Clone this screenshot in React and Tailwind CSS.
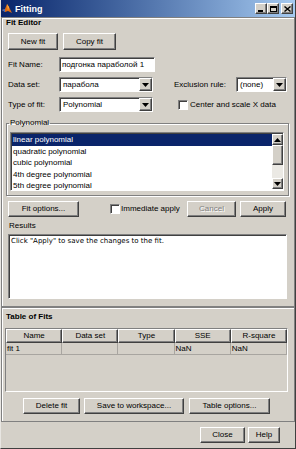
import React from 'react'

const raised =
  'bg-[#d4d0c8] border border-t-white border-l-white border-r-[#404040] border-b-[#404040] shadow-[inset_-1px_-1px_0_#808080]'
const sunken =
  'bg-white border border-t-[#808080] border-l-[#808080] border-r-white border-b-white shadow-[inset_1px_1px_0_#404040]'

const Arrow = ({ up }) => (
  <svg width="7" height="4" viewBox="0 0 7 4">
    <path d={up ? 'M0 4h7L3.5 0z' : 'M0 0h7L3.5 4z'} fill="#000" />
  </svg>
)

const Button = ({ className, children, disabled }) => (
  <div
    className={`${raised} flex items-center justify-center shrink-0 ${className} ${
      disabled ? 'text-[#808080] [text-shadow:1px_1px_0_white]' : ''
    }`}
  >
    {children}
  </div>
)

const Dropdown = ({ className, value }) => (
  <div className={`${sunken} h-[15px] flex items-stretch shrink-0 ${className}`}>
    <div className="flex-1 pl-[3px] flex items-center">{value}</div>
    <div className={`${raised} w-[13px] flex items-center justify-center`}>
      <Arrow />
    </div>
  </div>
)

const Checkbox = ({ className }) => (
  <div className={`${sunken} w-[10px] h-[10px] shrink-0 ${className}`} />
)

const MatlabIcon = () => (
  <svg width="10" height="11" viewBox="0 0 10 11">
    <path d="M0 7 L3 6 L5 1 L7 4 L10 10 L6 8 L3 9 Z" fill="#e06a10" />
    <path d="M0 7 L3 6 L3 9 Z" fill="#3a6fc8" />
    <path d="M5 1 L7 4 L6 8 Z" fill="#f8b040" />
  </svg>
)

const TitleButton = ({ children, className }) => (
  <div className={`${raised} w-[12px] h-[11px] flex items-center justify-center ${className}`}>{children}</div>
)

export default function App() {
  const polys = [
    'linear polynomial',
    'quadratic polynomial',
    'cubic polynomial',
    '4th degree polynomial',
    '5th degree polynomial',
  ]
  const cols = ['Name', 'Data set', 'Type', 'SSE', 'R-square']
  const row = ['fit 1', '', '', 'NaN', 'NaN']

  return (
    <div className="w-[296px] h-[449px] bg-[#d4d0c8] font-['Liberation_Sans',Arial,sans-serif] text-[8px] leading-[10px] text-black flex flex-col border-l border-l-[#e8e6e2] border-r border-r-[#404040] border-b border-b-[#404040] overflow-hidden">
      {/* Title bar */}
      <div className="h-[17px] shrink-0 bg-gradient-to-r from-[#0a246a] to-[#a6caf0] flex items-center pl-[1px] pr-[2px]">
        <MatlabIcon />
        <span className="ml-[3px] text-white font-bold text-[9px]">Fitting</span>
        <div className="ml-auto flex items-center">
          <TitleButton>
            <div className="w-[5px] h-[2px] bg-black mt-[5px] mr-[1px]" />
          </TitleButton>
          <TitleButton>
            <div className="w-[7px] h-[6px] border border-black border-t-2" />
          </TitleButton>
          <TitleButton className="ml-[2px]">
            <svg width="7" height="6" viewBox="0 0 7 6">
              <path d="M0.5 0.5L6.5 5.5M6.5 0.5L0.5 5.5" stroke="#000" strokeWidth="1.4" />
            </svg>
          </TitleButton>
        </div>
      </div>

      {/* Fit Editor */}
      <div className="h-[290px] shrink-0 border border-[#808080] shadow-[inset_1px_1px_0_white] flex flex-col">
        <div className="ml-[4px] h-[10px] font-bold">Fit Editor</div>

        <div className="mt-[5px] ml-[6px] flex gap-[5px]">
          <Button className="w-[50px] h-[17px]">New fit</Button>
          <Button className="w-[53px] h-[17px]">Copy fit</Button>
        </div>

        <div className="mt-[7px] ml-[6px] h-[15px] flex items-center">
          <span className="w-[51px]">Fit Name:</span>
          <div className={`${sunken} w-[96px] h-[15px] pl-[2px] flex items-center`}>подгонка параболой 1</div>
        </div>

        <div className="mt-[5px] ml-[6px] h-[15px] flex items-center">
          <span className="w-[51px]">Data set:</span>
          <Dropdown className="w-[94px]" value="парабола" />
          <span className="ml-[21px] w-[62px]">Exclusion rule:</span>
          <Dropdown className="w-[51px]" value="(none)" />
        </div>

        <div className="mt-[5px] ml-[6px] h-[15px] flex items-center">
          <span className="w-[51px]">Type of fit:</span>
          <Dropdown className="w-[94px]" value="Polynomial" />
          <Checkbox className="ml-[25px]" />
          <span className="ml-[2px]">Center and scale X data</span>
        </div>

        <fieldset className="mt-[6px] ml-[4px] w-[283px] border border-[#808080] shadow-[inset_1px_1px_0_white,1px_1px_0_white] pb-[4px]">
          <legend className="ml-[2px] px-[1px] h-[10px] leading-[10px]">Polynomial</legend>
          <div className={`${sunken} ml-[3px] mt-[4px] w-[274px] h-[59px] flex overflow-hidden`}>
            <div className="flex-1 pt-[1px] pl-[1px]">
              {polys.map((p, i) => (
                <div
                  key={p}
                  className={`h-[11.5px] leading-[11.5px] pl-[1px] ${i === 0 ? 'bg-[#0a246a] text-white' : ''}`}
                >
                  {p}
                </div>
              ))}
            </div>
            <div className="w-[11px] mt-[1px] mb-[1px] bg-[#ebe9e4] flex flex-col">
              <div className={`${raised} h-[11px] flex items-center justify-center`}>
                <Arrow up />
              </div>
              <div className={`${raised} h-[20px]`} />
              <div className="flex-1" />
              <div className={`${raised} h-[11px] flex items-center justify-center`}>
                <Arrow />
              </div>
            </div>
          </div>
        </fieldset>

        <div className="mt-[5px] ml-[6px] h-[16px] flex items-center">
          <Button className="w-[71px] h-[16px]">Fit options...</Button>
          <Checkbox className="ml-[31px]" />
          <span className="ml-[1px] w-[62px]">Immediate apply</span>
          <Button className="ml-[4px] w-[49px] h-[16px]" disabled>
            Cancel
          </Button>
          <Button className="ml-[4px] w-[46px] h-[16px]">Apply</Button>
        </div>

        <div className="mt-[4px] ml-[7px] h-[10px]">Results</div>
        <div className={`${sunken} mt-[3px] ml-[6px] w-[279px] h-[65px] pl-[2px] pt-[2px] text-[7px] leading-[9px] font-['DejaVu_Sans',sans-serif]`}>
          Click "Apply" to save the changes to the fit.
        </div>
      </div>

      {/* Table of Fits */}
      <div className="h-[115px] shrink-0 border border-[#808080] shadow-[inset_1px_1px_0_white] flex flex-col">
        <div className="mt-[4px] ml-[4px] h-[10px] font-bold">Table of Fits</div>
        <div className="mt-[6px] ml-[3px] w-[283px] h-[64px] border border-[#808080] border-r-white border-b-white flex flex-col">
          <div className="grid grid-cols-5 h-[14px]">
            {cols.map((c) => (
              <div key={c} className={`${raised} flex items-center justify-center`}>
                {c}
              </div>
            ))}
          </div>
          <div className="grid grid-cols-5 h-[12px]">
            {row.map((c, i) => (
              <div key={i} className="border-r border-b border-[#a8a5a0] pl-[1px] flex items-center">
                {c}
              </div>
            ))}
          </div>
        </div>
        <div className="mt-[6px] ml-[21px] h-[16px] flex">
          <Button className="w-[57px] h-[16px]">Delete fit</Button>
          <Button className="ml-[4px] w-[100px] h-[16px]">Save to workspace...</Button>
          <Button className="ml-[5px] w-[81px] h-[16px]">Table options...</Button>
        </div>
      </div>

      <div className="mt-[5px] ml-[199px] h-[16px] flex">
        <Button className="w-[45px] h-[16px]">Close</Button>
        <Button className="ml-[3px] w-[32px] h-[16px]">Help</Button>
      </div>
    </div>
  )
}
